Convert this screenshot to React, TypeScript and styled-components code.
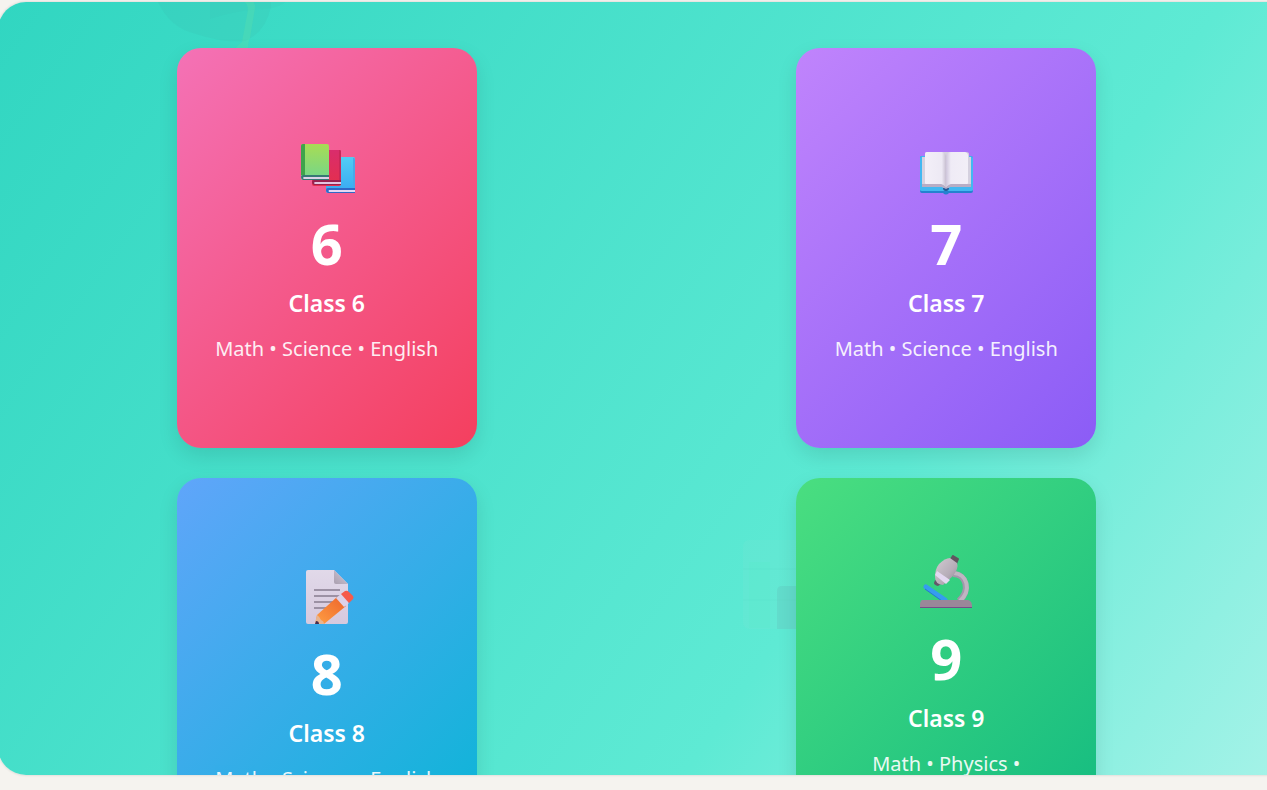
import React from "react";
import styled, { createGlobalStyle } from "styled-components";

const GlobalStyle = createGlobalStyle`
  *, *::before, *::after { box-sizing: border-box; }
  body {
    margin: 0;
    background: #f5f3ef;
    font-family: "Noto Sans", "Open Sans", sans-serif;
    overflow: hidden;
  }
`;

const Page = styled.main`
  display: flex;
  height: 100vh;
  padding: 2px 0 15px;
  overflow: hidden;
`;

const Panel = styled.section`
  position: relative;
  flex: 1;
  margin: 0 -48px 0 -2px;
  padding: 46px 74px 46px 34px;
  border-radius: 28px;
  overflow: hidden;
  background: linear-gradient(125deg, #31d6c1 0%, #5eead4 66%, #a9f3e9 100%);
  box-shadow: 0 0 2px 1px rgba(0, 0, 0, 0.08);
`;

const Grid = styled.div`
  position: relative;
  display: grid;
  grid-template-columns: repeat(2, 1fr);
  gap: 30px;
  justify-items: center;
`;

const Card = styled.a<{ $from: string; $to: string }>`
  display: flex;
  flex-direction: column;
  align-items: center;
  justify-content: center;
  width: 300px;
  height: 400px;
  padding: 32px;
  border-radius: 24px;
  background: linear-gradient(135deg, ${(p) => p.$from}, ${(p) => p.$to});
  box-shadow: 0 8px 20px rgba(0, 0, 0, 0.1);
  color: #fff;
  text-align: center;
  text-decoration: none;
`;

const Icon = styled.svg`
  display: block;
  width: 60px;
  height: 60px;
  margin: 8px 0 15px;
`;

const Level = styled.span`
  font-size: 56px;
  font-weight: 700;
  line-height: 56px;
`;

const Title = styled.h2`
  margin: 14px 0 13px;
  font-size: 23px;
  font-weight: 600;
  line-height: 36px;
`;

const Subjects = styled.p`
  margin: 0;
  font-size: 20px;
  line-height: 30px;
  opacity: 0.9;
`;

const Decoration = styled.svg<{ $left: string; $top: string }>`
  position: absolute;
  left: ${(p) => p.$left};
  top: ${(p) => p.$top};
  width: 130px;
  height: 130px;
  pointer-events: none;
`;

const Books = () => (
  <Icon viewBox="0 0 60 60" aria-hidden="true">
    <defs>
      <linearGradient id="bookGreen" x1="0" y1="0" x2="0" y2="1">
        <stop stopColor="#a8dc54" /><stop offset="1" stopColor="#72d68c" />
      </linearGradient>
      <linearGradient id="bookRed" x1="0" y1="0" x2="0" y2="1">
        <stop stopColor="#d92d6c" /><stop offset="1" stopColor="#e52f4c" />
      </linearGradient>
      <linearGradient id="bookBlue" x1="0" y1="0" x2="0" y2="1">
        <stop stopColor="#52cdf4" /><stop offset="1" stopColor="#38a9f2" />
      </linearGradient>
    </defs>
    <rect x="29" y="17" width="29" height="36" rx="2" fill="url(#bookBlue)" />
    <path d="M56 18h1q1 0 1 2v28h-2z" fill="#49a9e9" />
    <path d="M31 48h27v5H31q-2-1-2-3t2-2z" fill="#2f69c7" />
    <path d="M32 50h26v2H32q-1-1 0-2z" fill="#e4d7f3" />
    <rect x="15" y="10" width="29" height="36" rx="2" fill="url(#bookRed)" />
    <path d="M42 10h1q1 0 1 2v29h-2z" fill="#c92858" />
    <path d="M17 40h27v5H17q-2-1-2-3t2-2z" fill="#98224f" />
    <path d="M18 42h26v2H18q-2-1 0-2z" fill="#e3c4df" />
    <rect x="4" y="4" width="28" height="36" rx="2" fill="url(#bookGreen)" />
    <path d="M6 4h2v31H4V6q0-2 2-2z" fill="#3fa34b" />
    <path d="M6 35h26v5H6q-2-1-2-3t2-2z" fill="#377875" />
    <path d="M7 37h25v2H7q-2-1 0-2z" fill="#dcd2e8" />
  </Icon>
);

const OpenBook = () => (
  <Icon viewBox="0 0 60 60" aria-hidden="true">
    <defs>
      <linearGradient id="pageLeft">
        <stop stopColor="#f3eff8" /><stop offset=".8" stopColor="#ede9f4" /><stop offset="1" stopColor="#c8bfd1" />
      </linearGradient>
      <linearGradient id="pageRight">
        <stop stopColor="#cec5db" /><stop offset=".22" stopColor="#efebf6" /><stop offset="1" stopColor="#f2eff7" />
      </linearGradient>
    </defs>
    <path d="M6 16h48q3 0 3 2v33q0 2-2 2H33q-3 3-6 0H6q-2 0-2-2V18q0-2 2-2z" fill="#2482cf" />
    <path d="M6 16h48q3 0 3 2v32q0 1-2 1H6q-2 0-2-1V18q0-2 2-2z" fill="#43b8f1" />
    <path d="M6 17h3v-3q0-2 2-2h39q3 0 3 2v3h2v30H33l-3 3-3-3H6z" fill="#d5d1df" />
    <path d="M6 44h20l4 3 4-3h21v3H34l-4 3-4-3H6z" fill="#b8adc5" />
    <path d="M11 12h14q4 0 5 4v31q-2-3-5-3H10q-1 0-1-1V14q0-2 2-2z" fill="url(#pageLeft)" />
    <path d="M35 12h14q3 1 3 3v28q0 1-1 1H35q-3 0-5 3V16q1-4 5-4z" fill="url(#pageRight)" />
    <path d="M27 48h1l2 1 2-1h1q0 3-3 3t-3-3z" fill="#245794" />
  </Icon>
);

const Memo = () => (
  <Icon viewBox="0 3 60 60" aria-hidden="true">
    <defs>
      <linearGradient id="memoPage" x1="0" y1="0" x2="0" y2="1">
        <stop stopColor="#e1d9e9" /><stop offset="1" stopColor="#d6c9de" />
      </linearGradient>
      <linearGradient id="memoFold" x1="0" y1="1" x2="1" y2="0">
        <stop stopColor="#a99faf" /><stop offset="1" stopColor="#d3cad9" />
      </linearGradient>
      <linearGradient id="memoPencil" x1="0" y1="1" x2="1" y2="0">
        <stop stopColor="#ffa044" /><stop offset="1" stopColor="#ed642b" />
      </linearGradient>
    </defs>
    <path d="M11 3h26l14 14v38q0 2-2 2H11q-2 0-2-2V5q0-2 2-2z" fill="url(#memoPage)" />
    <path d="M37 3v12q0 2 2 2h12z" fill="url(#memoFold)" />
    <path d="M17 23h26M17 29h26M17 35h22M17 41h16" stroke="#9c91a4" strokeWidth="2" />
    <path d="M18 57l2-9 20-18 9 9-22 18z" fill="url(#memoPencil)" />
    <path d="M18 57l2-9q3 2 4 5 3 1 3 4z" fill="#e8b491" />
    <path d="M18 57l1-3q3 0 3 3z" fill="#472e50" />
    <path d="M39 31l5-4 8 9-5 4z" fill="#ddd2e9" />
    <path d="M44 27l4-3q2-1 4 1l4 4q1 2 0 3l-4 4z" fill="#f65b4b" />
  </Icon>
);

const Microscope = () => (
  <Icon viewBox="-1 1 60 60" aria-hidden="true">
    <defs>
      <linearGradient id="scopeTube" x1="0" y1="0" x2="1" y2="1">
        <stop stopColor="#d2cbd2" /><stop offset=".6" stopColor="#b6adb8" /><stop offset="1" stopColor="#8f8191" />
      </linearGradient>
    </defs>
    <path d="M36 20c13 0 18 16 6 27" fill="none" stroke="#a197ab" strokeWidth="6" />
    <path d="M37 19c13 1 18 17 6 28" fill="none" stroke="#bfb5c2" strokeWidth="4" />
    <path d="M9 33L28 46" stroke="#359df0" strokeWidth="5" strokeLinecap="round" />
    <path d="M8 35L25 47" stroke="#2877cf" strokeWidth="1" />
    <path d="M34 5l2-3 5 3-2 5z" fill="#615560" stroke="#615560" strokeWidth="2" strokeLinejoin="round" />
    <path d="M18 26l6 4-3 2q-4-1-4-3z" fill="#65566a" />
    <path d="M22 10Q28 4 33 4l7 5q2 5-4 13L26 31q-8-1-8-8 0-8 4-13z" fill="url(#scopeTube)" />
    <path d="M20 17l13 9-4 4-11-9z" fill="#e3d8f0" />
    <path d="M5 46h46q4 1 4 6v2H3v-3q0-4 2-5z" fill="#9a8799" />
    <path d="M3 53h52v1H3z" fill="#754f89" />
  </Icon>
);

const classes = [
  { level: 6, from: "#f472b6", to: "#f43f5e", icon: <Books />, subjects: "Math • Science • English" },
  { level: 7, from: "#c084fc", to: "#8b5cf6", icon: <OpenBook />, subjects: "Math • Science • English" },
  { level: 8, from: "#60a5fa", to: "#06b6d4", icon: <Memo />, subjects: "Math • Science • English" },
  { level: 9, from: "#4ade80", to: "#10b981", icon: <Microscope />, subjects: "Math • Physics • Chemistry" },
];

export default function App() {
  return (
    <>
      <GlobalStyle />
      <Page>
        <Panel aria-label="Classes">
          <Decoration $left="160px" $top="-76px" viewBox="0 0 130 130" aria-hidden="true">
            <path d="M0 76Q12 102 38 108q27 9 49 7 20-8 26-34V40H0z" fill="#3abdb0" opacity=".22" />
            <path d="M52 93q27-9 54-10 15-1 23-8V50H52z" fill="#3abdb0" opacity=".1" />
            <path d="M84 75q8 2 5 14l-5 27q-4 3-8 8h14q0-8 2-12l5-30q0-7-5-10z" fill="#69e4a5" opacity=".25" />
          </Decoration>
          <Decoration $left="56%" $top="537px" viewBox="-3 0 130 130" aria-hidden="true">
            <path d="M4 8q0-7 7-7h69v89H11q-7 0-7-7z" fill="#82e6d1" opacity=".16" />
            <path d="M10 23h21v66H10z" fill="#58edc6" opacity=".25" />
            <path d="M4 30h76M4 61h76" stroke="#51d8c7" opacity=".1" strokeWidth="2" />
            <path d="M38 52q0-5 5-5h37v43H38z" fill="#62c7bd" opacity=".35" />
          </Decoration>
          <Grid>
            {classes.map((c) => (
              <Card key={c.level} href={`#class-${c.level}`} $from={c.from} $to={c.to}>
                {c.icon}
                <Level>{c.level}</Level>
                <Title>Class {c.level}</Title>
                <Subjects>{c.subjects}</Subjects>
              </Card>
            ))}
          </Grid>
        </Panel>
      </Page>
    </>
  );
}
